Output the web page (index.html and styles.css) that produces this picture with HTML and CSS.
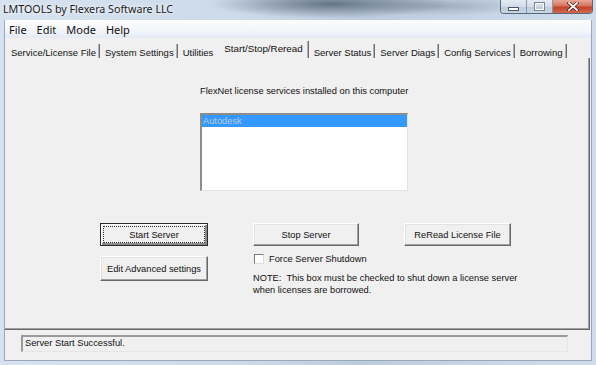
FILE: index.html
```html
<!DOCTYPE html>
<html>
<head>
<meta charset="utf-8">
<link rel="stylesheet" href="styles.css">
</head>
<body>
<div class="window">
  <div class="titlebar">
    <span class="title">LMTOOLS by Flexera Software LLC</span>
    <div class="caption-btns">
      <div class="cbtn min"><span class="min-glyph"></span></div>
      <div class="cbtn max"><span class="max-glyph"></span></div>
      <div class="cbtn close">
        <svg width="12" height="9" viewBox="0 0 12 9"><path d="M2 1 L10 8 M10 1 L2 8" stroke="#5a1a10" stroke-width="3.2" stroke-linecap="square"/><path d="M2 1 L10 8 M10 1 L2 8" stroke="#ffffff" stroke-width="1.8" stroke-linecap="square"/></svg>
      </div>
    </div>
  </div>
  <div class="client">
    <div class="menubar">
      <span class="menu-item">File</span>
      <span class="menu-item">Edit</span>
      <span class="menu-item">Mode</span>
      <span class="menu-item">Help</span>
    </div>
    <div class="tabs">
      <span class="tab">Service/License File</span>
      <span class="tab">System Settings</span>
      <span class="tab before-active">Utilities</span>
      <span class="tab active">Start/Stop/Reread</span>
      <span class="tab">Server Status</span>
      <span class="tab">Server Diags</span>
      <span class="tab">Config Services</span>
      <span class="tab">Borrowing</span>
    </div>
    <div class="panel">
      <div class="services">
        <div class="caption">FlexNet license services installed on this computer</div>
        <div class="listbox">
          <div class="list-item selected">Autodesk</div>
        </div>
      </div>
      <div class="controls">
        <div class="col-left">
          <div class="btn focused"><span class="focus-ring">Start Server</span></div>
          <div class="btn tall">Edit Advanced settings</div>
        </div>
        <div class="col-right">
          <div class="btn-row">
            <div class="btn stop">Stop Server</div>
            <div class="btn reread">ReRead License File</div>
          </div>
          <label class="check-row"><span class="checkbox"></span>Force Server Shutdown</label>
          <div class="note">NOTE:&nbsp; This box must be checked to shut down a license server<br>when licenses are borrowed.</div>
        </div>
      </div>
    </div>
    <div class="status-row">
      <div class="status">Server Start Successful.</div>
    </div>
  </div>
</div>
</body>
</html>
```

FILE: styles.css
```css
html, body {
  margin: 0;
  padding: 0;
}
body {
  width: 596px;
  height: 365px;
  overflow: hidden;
  background: #c6d5e7;
}
.window {
  width: 596px;
  height: 365px;
  display: flex;
  flex-direction: column;
  background:
    radial-gradient(ellipse 120px 14px at 330px 4px, rgba(70,85,105,0.75), rgba(70,85,105,0) 100%),
    radial-gradient(ellipse 90px 10px at 440px 6px, rgba(120,135,150,0.5), rgba(120,135,150,0) 100%),
    linear-gradient(to right, #d6e2ef 0%, #cddaea 40%, #bccbdc 60%, #c9d7e8 85%, #d0dcea 100%);
}
.titlebar {
  height: 20px;
  position: relative;
  flex: none;
}
.title {
  position: absolute;
  left: 3px;
  top: 2px;
  font-family: "Noto Sans", "Open Sans", sans-serif;
  font-size: 10.7px;
  color: #1a1a1a;
  text-shadow: 0 0 6px rgba(255,255,255,0.9), 0 0 3px rgba(255,255,255,0.9);
}
.caption-btns {
  position: absolute;
  right: 3px;
  top: 0;
  display: flex;
  height: 13px;
  border: 1px solid #57687d;
  border-top: none;
  border-radius: 0 0 4px 4px;
  overflow: hidden;
}
.cbtn {
  height: 13px;
  display: flex;
  align-items: center;
  justify-content: center;
}
.cbtn.min, .cbtn.max {
  width: 25px;
  background: linear-gradient(#e4ebf3 0%, #d2dce8 50%, #bccadb 51%, #c9d6e5 100%);
  border-right: 1px solid #8899ad;
}
.cbtn.close {
  width: 39px;
  background: linear-gradient(#e8a898 0%, #d7725d 45%, #c5402a 55%, #d06a4f 100%);
}
.min-glyph {
  width: 9px;
  height: 2px;
  background: #ffffff;
  border: 1px solid #4a5668;
  margin-top: 5px;
}
.max-glyph {
  width: 7px;
  height: 5px;
  border: 1px solid #ffffff;
  outline: 1px solid #7b8799;
}
.client {
  flex: 1;
  margin: 0 4px 4px 4px;
  background: #f0f0f0;
  border: 1px solid #97a8bc;
  border-top: none;
  display: flex;
  flex-direction: column;
  min-height: 0;
}
.menubar {
  height: 17px;
  display: flex;
  align-items: center;
  padding-left: 2px;
  background: linear-gradient(#fcfcfd 0%, #f4f6fa 55%, #e4e9f4 100%);
  border-top: 1px solid #ffffff;
  font-family: "Noto Sans", "Open Sans", sans-serif;
  font-size: 11px;
  color: #111111;
  flex: none;
}
.menu-item {
  padding: 0 5px 0 2px;
  margin-right: 3px;
}
.tabs {
  height: 20px;
  display: flex;
  align-items: flex-end;
  font-family: "Liberation Sans", Arial, sans-serif;
  font-size: 9.5px;
  color: #111111;
  flex: none;
}
.tab {
  box-sizing: border-box;
  height: 14px;
  padding: 3px 3px 0 5px;
  line-height: 11px;
  border-right: 1px solid #6f6f6f;
  box-shadow: inset -1px 0 0 #b0b0b0;
  white-space: nowrap;
}
.tab:first-child {
  padding-left: 6px;
}
.tab.before-active {
  border-right-color: transparent;
  box-shadow: none;
  padding-right: 0;
}
.tab.active {
  height: 17px;
  padding: 2px 5px 0 10px;
  line-height: 11px;
  font-size: 9.8px;
}
.panel {
  flex: 1;
  border-right: 1px solid #696969;
  border-bottom: 1px solid #696969;
  box-shadow: inset -1px -1px 0 #a0a0a0;
  margin-right: 1px;
  display: flex;
  flex-direction: column;
  font-family: "Liberation Sans", Arial, sans-serif;
  font-size: 9.3px;
  color: #111111;
}
.services {
  margin-left: 195px;
  margin-top: 28px;
  width: 208px;
}
.caption {
  height: 11px;
  line-height: 11px;
  white-space: nowrap;
}
.listbox {
  margin-top: 16px;
  height: 75px;
  background: #ffffff;
  border-top: 2px solid #8c8c8c;
  border-left: 2px solid #8c8c8c;
  border-right: 1px solid #e3e3e3;
  border-bottom: 1px solid #e3e3e3;
}
.list-item {
  height: 12px;
  line-height: 12px;
  padding-left: 1px;
}
.list-item.selected {
  background: #3399ff;
  color: #b8cde6;
}
.controls {
  display: flex;
  gap: 45px;
  margin-left: 95px;
  margin-top: 32px;
}
.col-left {
  width: 108px;
  display: flex;
  flex-direction: column;
  gap: 10px;
}
.btn {
  box-sizing: border-box;
  height: 23px;
  display: flex;
  align-items: center;
  justify-content: center;
  background: #f0f0f0;
  border-top: 1px solid #ffffff;
  border-left: 1px solid #ffffff;
  border-right: 1px solid #696969;
  border-bottom: 1px solid #696969;
  box-shadow: inset -1px -1px 0 #a0a0a0, inset 1px 1px 0 #e3e3e3;
  white-space: nowrap;
}
.btn.tall {
  height: 25px;
}
.btn.focused {
  border: 1px solid #2b2b2b;
  box-shadow: inset 1px 1px 0 #ffffff, inset -2px -2px 0 #8a8a8a;
  padding: 2px;
}
.focus-ring {
  flex: 1;
  align-self: stretch;
  display: flex;
  align-items: center;
  justify-content: center;
  border: 1px dotted #333333;
}
.col-right {
  display: flex;
  flex-direction: column;
}
.btn-row {
  display: flex;
  gap: 45px;
}
.btn.stop {
  width: 106px;
}
.btn.reread {
  width: 107px;
}
.check-row {
  display: flex;
  align-items: center;
  margin-top: 7px;
  height: 11px;
  margin-left: 1px;
}
.checkbox {
  box-sizing: border-box;
  width: 10px;
  height: 10px;
  background: #ffffff;
  border-top: 1px solid #7a7a7a;
  border-left: 1px solid #7a7a7a;
  border-right: 1px solid #dcdcdc;
  border-bottom: 1px solid #dcdcdc;
  margin-right: 5px;
}
.note {
  margin-top: 8px;
  line-height: 12px;
  white-space: nowrap;
}
.status-row {
  height: 30px;
  flex: none;
  display: flex;
  align-items: flex-start;
  padding-top: 5px;
  box-sizing: border-box;
}
.status {
  margin-left: 16px;
  width: 547px;
  height: 17px;
  box-sizing: border-box;
  border-top: 2px solid #9a9a9a;
  border-left: 2px solid #9a9a9a;
  border-right: 1px solid #e6e6e6;
  border-bottom: 1px solid #e6e6e6;
  font-family: "Liberation Sans", Arial, sans-serif;
  font-size: 9.3px;
  line-height: 13px;
  padding-left: 2px;
  color: #111111;
}
```
